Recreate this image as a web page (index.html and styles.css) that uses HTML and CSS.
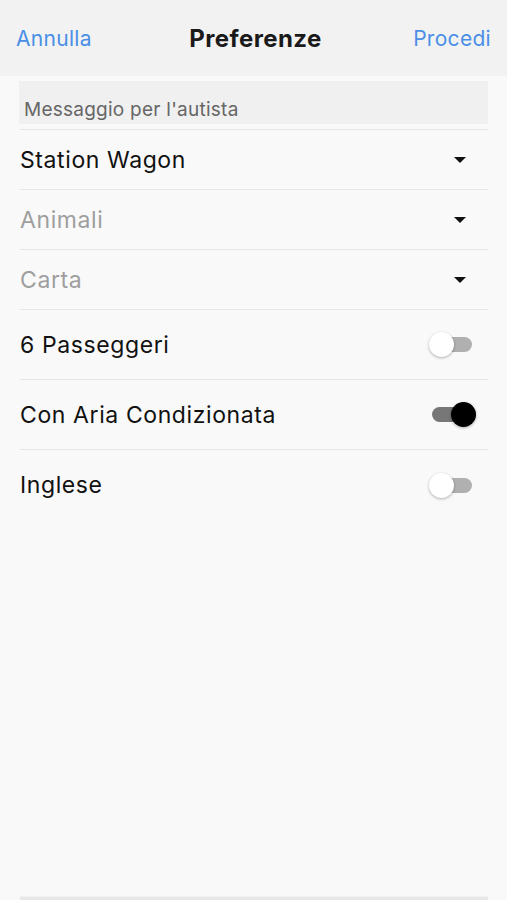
FILE: index.html
```html
<!DOCTYPE html>
<html lang="it">

<head>
    <meta charset="UTF-8">
    <meta name="viewport" content="width=device-width, initial-scale=1.0">
    <title>Preferenze</title>
    <link rel="stylesheet" href="styles.css">
</head>

<body>
    <div class="topBar">
        <span class="navBtn">Annulla</span>
        <span class="navTitle">Preferenze</span>
        <span class="navBtn">Procedi</span>
    </div>
    <div class="content">
        <div class="msgBox">Messaggio per l'autista</div>
        <ul class="prefList">
            <li class="selRow"><span>Station Wagon</span><i class="caret"></i></li>
            <li class="selRow empty"><span>Animali</span><i class="caret"></i></li>
            <li class="selRow empty"><span>Carta</span><i class="caret"></i></li>
            <li class="swRow"><span>6 Passeggeri</span><i class="switch"></i></li>
            <li class="swRow"><span>Con Aria Condizionata</span><i class="switch on"></i></li>
            <li class="swRow last"><span>Inglese</span><i class="switch"></i></li>
        </ul>
    </div>
    <div class="bottomLine"></div>
</body>

</html>
```

FILE: styles.css
```css
* {
    padding: 0;
    margin: 0;
    list-style: none;
    box-sizing: border-box;
}

body {
    width: 507px;
    height: 900px;
    overflow: hidden;
    background-color: #f9f9f9;
    font-family: Inter, "Liberation Sans", sans-serif;
    color: #111;
    display: flex;
    flex-direction: column;
}

.topBar {
    height: 76px;
    background-color: #f2f2f2;
    display: flex;
    align-items: center;
    justify-content: space-between;
    padding: 0 16px 0 16px;
}

.navBtn {
    color: #4a8fe6;
    font-size: 21px;
    letter-spacing: 0.3px;
}

.navTitle {
    font-size: 24px;
    font-weight: bold;
    letter-spacing: 0.4px;
    color: #1a1a1a;
    margin-left: 6px;
}

.content {
    flex: 1;
    padding: 5px 19px 0 19px;
}

.msgBox {
    height: 43px;
    margin-bottom: 5px;
    background-color: #f0f0f0;
    color: #666;
    font-size: 19px;
    letter-spacing: 0.25px;
    padding: 17px 0 0 5px;
    line-height: 24px;
}

.prefList {
    border-top: 1px solid #e6e6e6;
    margin-left: 1px;
}

.prefList li {
    display: flex;
    align-items: center;
    justify-content: space-between;
    border-bottom: 1px solid #e6e6e6;
    font-size: 23px;
    letter-spacing: 0.6px;
}

.prefList li.last {
    border-bottom: none;
}

.selRow {
    height: 60px;
}

.selRow.empty span {
    color: #9e9e9e;
}

.caret {
    width: 0;
    height: 0;
    border-left: 6px solid transparent;
    border-right: 6px solid transparent;
    border-top: 6px solid #111;
    margin-right: 22px;
}

.swRow {
    height: 70px;
}

.switch {
    position: relative;
    width: 40px;
    height: 15px;
    border-radius: 8px;
    background-color: #b0b0b0;
    margin-right: 16px;
}

.switch::after {
    content: "";
    position: absolute;
    left: -3px;
    top: -5px;
    width: 25px;
    height: 25px;
    border-radius: 50%;
    background-color: #fff;
    box-shadow: 0 1px 3px rgba(0, 0, 0, 0.3);
}

.switch.on {
    background-color: #777;
}

.switch.on::after {
    left: 19px;
    background-color: #000;
}

.bottomLine {
    height: 4px;
    margin: 0 19px 0 20px;
    background-color: #e8e8e8;
    border-top: 1px solid #f2f2f2;
}
```
